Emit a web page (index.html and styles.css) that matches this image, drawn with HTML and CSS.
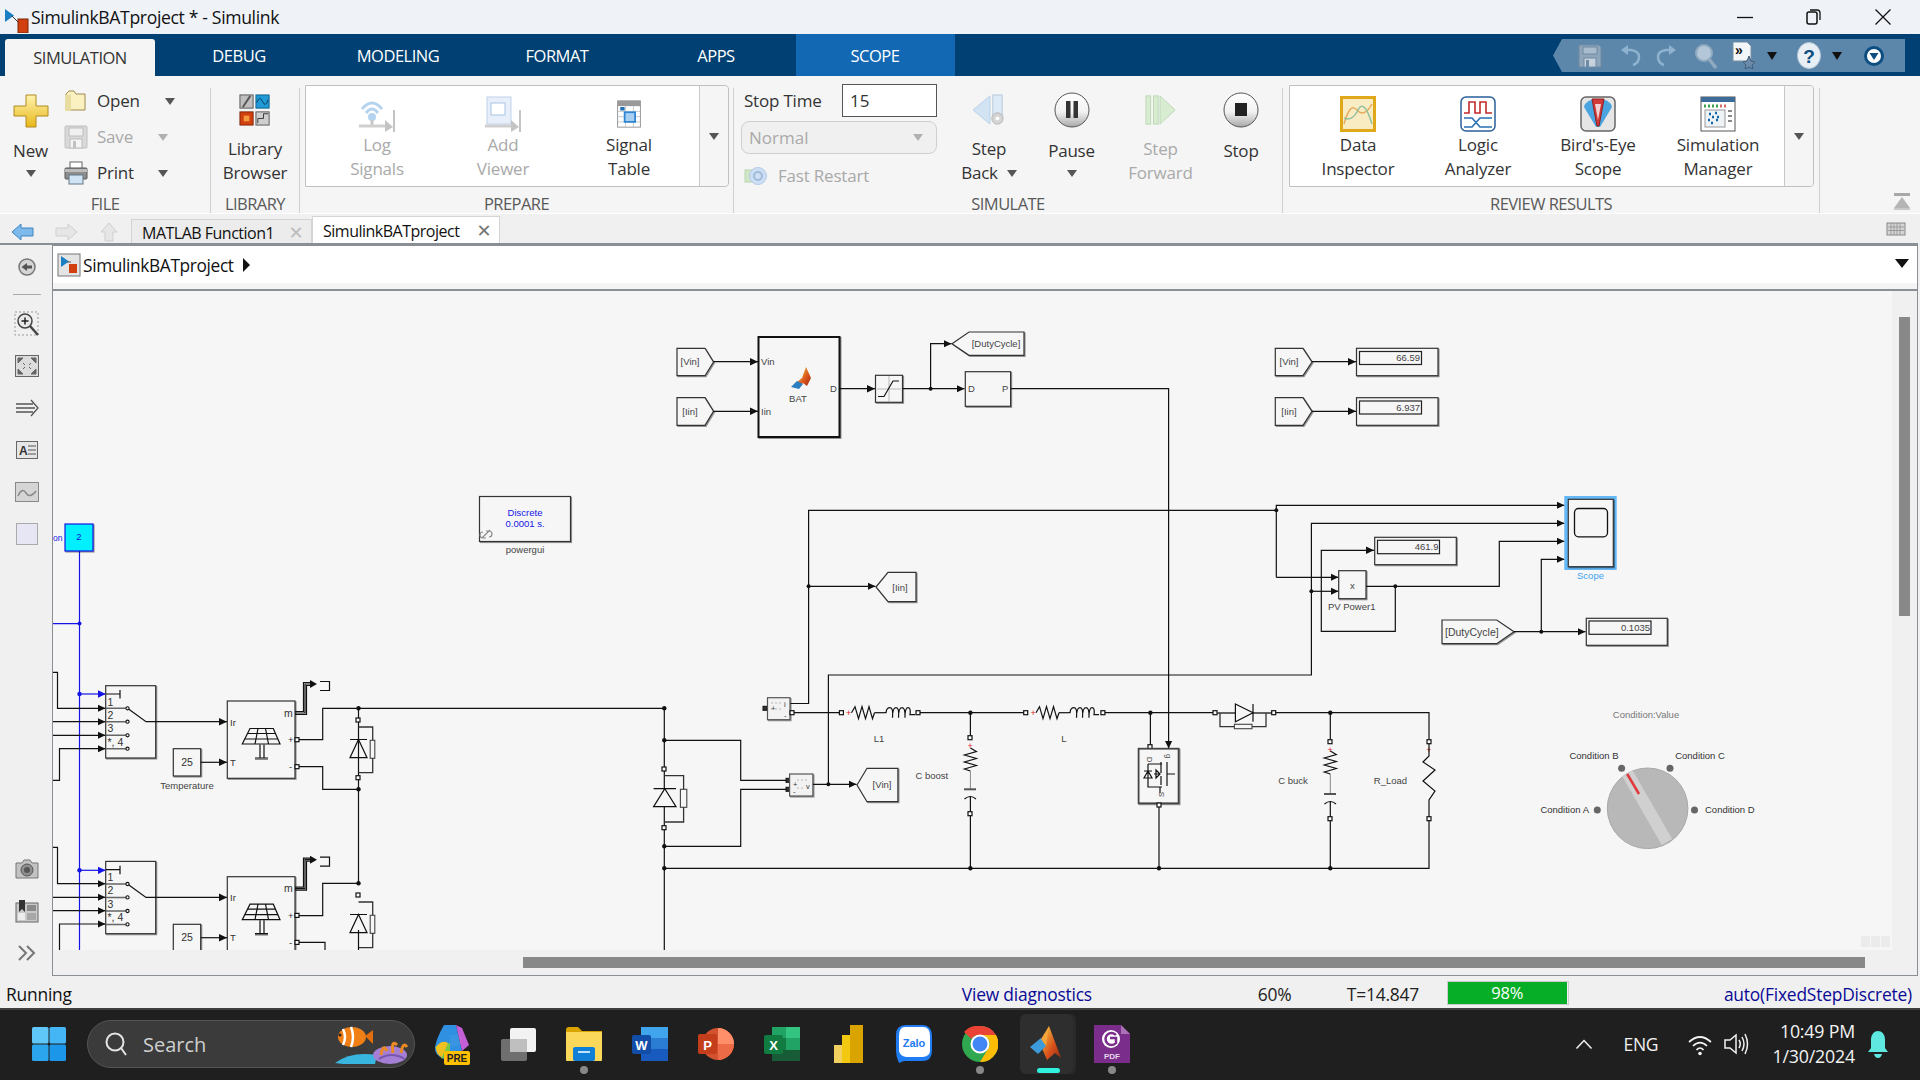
FILE: index.html
```html
<!DOCTYPE html>
<html lang="en">
<head>
<meta charset="utf-8">
<title>SimulinkBATproject * - Simulink</title>
<link rel="stylesheet" href="styles.css">
</head>
<body>
<svg class="defs" aria-hidden="true">
  <defs>
    <linearGradient id="gKnob" x1="0" y1="0" x2="0" y2="1"><stop offset="0" stop-color="#fff"/><stop offset=".55" stop-color="#f2f2f2"/><stop offset="1" stop-color="#a9a9a9"/></linearGradient>
    <linearGradient id="gYel" x1="0" y1="0" x2="0" y2="1"><stop offset="0" stop-color="#fff3b0"/><stop offset="1" stop-color="#e8b818"/></linearGradient>
    <linearGradient id="gMat" x1="0" y1="0" x2="1" y2="1"><stop offset="0" stop-color="#f6d040"/><stop offset=".6" stop-color="#d9501c"/><stop offset="1" stop-color="#8d2a10"/></linearGradient>
    <marker id="a" markerUnits="userSpaceOnUse" markerWidth="9" markerHeight="9" refX="8" refY="4.5" orient="auto"><path d="M0 .7L8 4.5L0 8.3z" fill="#111"/></marker>
    <marker id="ab" markerUnits="userSpaceOnUse" markerWidth="9" markerHeight="9" refX="8" refY="4.5" orient="auto"><path d="M0 .7L8 4.5L0 8.3z" fill="#1414e6"/></marker>
    <g id="pt"><rect x="-2" y="-2" width="4" height="4" fill="#fff" stroke="#111" stroke-width="1.2"/></g>
    <g id="ptf"><rect x="-2" y="-2" width="4" height="4" fill="#333" stroke="#111" stroke-width="1"/></g>
    <g id="simu"><rect x="1" y="1" width="22" height="22" fill="#e4e4e4" stroke="#777"/><path d="M4 3v11l8-5.5z" fill="#1b7fc4"/><path d="M10 9h4" stroke="#555"/><rect x="12" y="11" width="8" height="9" fill="#d2400f"/></g>
    <g id="switch">
      <rect class="blk" x="105.7" y="685.7" width="50" height="72.3"/>
      <path class="wg" d="M106 708.3H127M106 721.7H127M106 735.3H127M106 748.7H127"/>
      <path class="w" d="M106 694H120M120 690V698.5M127.5 708.3L146 721.7H155.7"/>
      <circle class="oc" cx="127.5" cy="708.3" r="1.6"/><circle class="oc" cx="127.5" cy="721.7" r="1.6"/><circle class="oc" cx="127.5" cy="735.3" r="1.6"/><circle class="oc" cx="127.5" cy="748.7" r="1.6"/>
      <text class="t10" x="107.5" y="705.5">1</text><text class="t10" x="107.5" y="718.7">2</text><text class="t10" x="107.5" y="731.9">3</text><text class="t10" x="107.5" y="745.5">*, 4</text>
    </g>
    <g id="pv">
      <rect class="blk" x="227.3" y="701" width="67.7" height="77.3"/>
      <path class="w" d="M250 728.5H273.3L280 744H242.3zM244.5 739H277.8M247 733.5H275.8M258 728.5L255 744M265.5 728.5L268.5 744"/>
      <path class="w" d="M260 744.5V758M264 744.5V758M255 758H268"/><path class="wg" d="M255 759H268"/>
      <text class="t9" x="230" y="725.5">Ir</text><text class="t9" x="230" y="765.5">T</text>
      <text class="t10" x="284" y="716.5">m</text><text class="t9" x="288" y="743">+</text><text class="t9" x="289" y="770">-</text>
      <path class="w" d="M295 711.5H303.5V682.5H312"/><path class="w" d="M295 713H305V684H312"/><path class="w" d="M295 714.5H306.5V685.5H312"/>
      <path d="M310 680L317 684L310 688z" fill="#111"/>
      <path class="w" d="M320 681.5H329.5V690.5H320"/>
      <use href="#pt" x="297" y="739.7"/><use href="#pt" x="297" y="766.7"/>
    </g>
    <g id="diode">
      <path class="w" d="M350 739.5H367M358.5 739.5L367 757.7H350z"/>
      <rect class="snb" x="370.2" y="740.3" width="4.6" height="18"/>
      <path class="wd" d="M358.5 727H372.7V740M372.7 758V772.7H358.5"/>
      <use href="#pt" x="358" y="720"/><use href="#pt" x="358" y="777.7"/>
    </g>
    <path id="zig" d="M0 0L3.5 -6L7 6L10.5 -6L14 6L17.5 -6L21 6L23 0"/>
    <path id="coil" d="M0 0H1Q1.5 -5 5 -5T7.5 5Q7.5 -5 11 -5T13.5 5Q13.5 -5 17 -5T20 5Q20 -5 23 -5T25 2L27 2H30"/>
  </defs>
</svg>

<div class="app">
  <header class="titlebar">
    <svg class="title-icon" width="26" height="25" viewBox="0 0 26 25"><path d="M2 1v13l9-6.500z" fill="#1b7fc4"/><path d="M9 8l6 6" stroke="#333" fill="none"/><rect x="15" y="11" width="10" height="14" fill="#d2400f" stroke="#7a2408"/></svg>
    <span class="title-text">SimulinkBATproject * - Simulink</span>
    <div class="winctl">
      <svg class="wc" width="20" height="20" viewBox="0 0 20 20"><path d="M2 10.500H18" stroke="#111" stroke-width="1.300"/></svg>
      <svg class="wc" width="20" height="20" viewBox="0 0 20 20"><rect x="3" y="5" width="10" height="12" rx="2" fill="none" stroke="#111" stroke-width="1.500"/><path d="M6 3h7q3 0 3 3v7" fill="none" stroke="#111" stroke-width="1.300"/></svg>
      <svg class="wc" width="20" height="20" viewBox="0 0 20 20"><path d="M2.500 2.500L17.500 17.500M17.500 2.500L2.500 17.500" stroke="#111" stroke-width="1.300"/></svg>
    </div>
  </header>

  <nav class="tabbar">
    <div class="tab tab-active">SIMULATION</div>
    <div class="tab">DEBUG</div>
    <div class="tab">MODELING</div>
    <div class="tab">FORMAT</div>
    <div class="tab">APPS</div>
    <div class="tab tab-scope">SCOPE</div>
    <div class="qat">
      <svg class="q-save" width="24" height="24" viewBox="0 0 24 24"><path d="M1 1h20l2 2v20H1z" fill="#8ea5ba" stroke="#6f8aa3"/><rect x="5" y="3" width="14" height="7" fill="#a9bccd" stroke="#6f8aa3"/><rect x="6" y="14" width="12" height="9" fill="#c6d3df" stroke="#6f8aa3"/><rect x="8" y="16" width="3" height="7" fill="#6f8aa3"/></svg>
      <svg class="q-undo" width="22" height="24" viewBox="0 0 22 24"><path d="M14 21Q20 19 20 13T12 6H7" fill="none" stroke="#8fb2cf" stroke-width="2.500"/><path d="M9 1L2 6L9 11z" fill="#8fb2cf"/></svg>
      <svg class="q-redo" width="22" height="24" viewBox="0 0 22 24"><path d="M8 21Q2 19 2 13T10 6H15" fill="none" stroke="#8fb2cf" stroke-width="2.500"/><path d="M13 1L20 6L13 11z" fill="#8fb2cf"/></svg>
      <svg class="q-find" width="24" height="26" viewBox="0 0 24 26"><circle cx="10" cy="10" r="8" fill="#b4c7d8" stroke="#8fa9bf" stroke-width="2"/><path d="M15 16L22 25" stroke="#8fa9bf" stroke-width="3.500"/></svg>
      <svg class="q-short" width="24" height="27" viewBox="0 0 24 27"><path d="M1 0h14l4 4v15H1z" fill="#f3f6f9" stroke="#7d8f9e"/><text class="q-chev" x="3" y="13">»</text><path d="M17 14l2 5 4 1-3 3 1 4-4-2-4 2 1-4-3-3 4-1z" fill="#6d8cab" stroke="#3f5d79"/></svg>
      <span class="q-caret"></span>
      <svg class="q-help" width="24" height="27" viewBox="0 0 24 27"><ellipse cx="12" cy="13.500" rx="11.500" ry="13" fill="#e7eef4" stroke="#b6c9d9"/><text class="q-q" x="12" y="21" text-anchor="middle">?</text></svg>
      <span class="q-caret q-caret2"></span>
      <svg class="q-down" width="20" height="22" viewBox="0 0 20 22"><circle cx="10" cy="11" r="8.500" fill="#fff" stroke="#0d4d80" stroke-width="3"/><path d="M5.500 8H14.500L10 15z" fill="#0d4d80"/></svg>
    </div>
  </nav>

  <section class="ribbon">
    <div class="group g-file">
      <div class="gbody">
        <div class="big g-new">
          <svg width="36" height="34" viewBox="0 0 36 34"><path d="M13 1h10v11h12v10H23v11H13V22H1V12h12z" fill="url(#gYel)" stroke="#b08a20"/></svg>
          <span class="lbl">New</span>
          <span class="caret"></span>
        </div>
        <div class="file-list">
          <div class="frow">
            <svg width="24" height="22" viewBox="0 0 24 22"><path d="M2 4l3-3 5 0 2 3h9v16H2z" fill="#fbf0c0" stroke="#9d8a4c"/><path d="M1 5h6v16H1z" fill="#e9dca0"/></svg>
            <span class="lbl">Open</span><span class="caret c-open"></span>
          </div>
          <div class="frow dim">
            <svg width="24" height="24" viewBox="0 0 24 24"><rect x="1" y="1" width="22" height="22" rx="1" fill="#d9d9d9" stroke="#c0c0c0"/><rect x="5" y="3" width="14" height="8" fill="#f0f0f0" stroke="#bdbdbd"/><rect x="6" y="14" width="12" height="9" fill="#f4f4f4" stroke="#bdbdbd"/><rect x="9" y="16" width="3" height="7" fill="#c2c2c2"/></svg>
            <span class="lbl">Save</span><span class="caret c-save"></span>
          </div>
          <div class="frow">
            <svg width="24" height="24" viewBox="0 0 24 24"><rect x="6" y="1" width="12" height="7" fill="#fff" stroke="#666"/><rect x="1" y="7" width="22" height="11" rx="1" fill="#8d8d8d" stroke="#555"/><rect x="1" y="8" width="22" height="3" fill="#bcbcbc"/><rect x="5" y="14" width="14" height="9" fill="#cfe3f5" stroke="#66788a"/></svg>
            <span class="lbl">Print</span><span class="caret c-save"></span>
          </div>
        </div>
      </div>
      <div class="glabel">FILE</div>
    </div>

    <div class="group g-lib">
      <div class="gbody">
        <div class="big g-libbtn">
          <svg width="34" height="34" viewBox="0 0 34 34"><rect x="1" y="1" width="14" height="14" fill="#bfbfbf" stroke="#555"/><path d="M4 14L12 2" stroke="#555" stroke-width="2"/><rect x="18" y="1" width="14" height="14" fill="#1f9ad6" stroke="#0d5f8d"/><path d="M19 9Q22 1 25 8T31 6" stroke="#0a3a5c" fill="none"/><rect x="1" y="19" width="14" height="14" fill="#d2400f" stroke="#7d2608"/><rect x="5" y="23" width="6" height="6" fill="#f29a3e"/><rect x="18" y="19" width="14" height="14" fill="#cfcfcf" stroke="#555"/><path d="M20 31V26H26V21H31" stroke="#333" fill="none"/></svg>
          <span class="lbl">Library</span>
          <span class="lbl">Browser</span>
        </div>
      </div>
      <div class="glabel">LIBRARY</div>
    </div>

    <div class="group g-prep">
      <div class="gbody">
        <div class="gallery gal-prep">
          <div class="gitem dim">
            <svg width="38" height="36" viewBox="0 0 38 36"><path d="M4 13Q14 1 24 13M8 17Q14 9 20 17" fill="none" stroke="#b4d3ee" stroke-width="3"/><circle cx="14" cy="21" r="4" fill="#b4d3ee"/><path d="M14 24V29" stroke="#c8c8c8" stroke-width="3"/><path d="M1 30H28" stroke="#cfcfcf" stroke-width="3"/><path d="M27 24L35 31L27 36z" fill="#c4c4c4"/><path d="M36 14V36" stroke="#c4c4c4" stroke-width="2"/></svg>
            <span class="lbl">Log</span><span class="lbl">Signals</span>
          </div>
          <div class="gitem dim">
            <svg width="38" height="36" viewBox="0 0 38 36"><rect x="3" y="1" width="24" height="27" fill="#e7effa" stroke="#bfd2ea"/><rect x="7" y="7" width="14" height="12" fill="#fff" stroke="#a9c4e4"/><path d="M1 30H28" stroke="#cfcfcf" stroke-width="3"/><path d="M27 24L35 31L27 36z" fill="#c4c4c4"/><path d="M36 14V36" stroke="#c4c4c4" stroke-width="2"/></svg>
            <span class="lbl">Add</span><span class="lbl">Viewer</span>
          </div>
          <div class="gitem">
            <svg class="gi-sig" width="26" height="28" viewBox="0 0 28 32"><rect x="1" y="1" width="26" height="30" fill="#fff" stroke="#8a8a8a"/><rect x="1" y="1" width="26" height="6" fill="#9a9a9a"/><rect x="4" y="8" width="5" height="4" fill="#1f6fb5"/><path d="M1 13H27M1 19H27M1 25H27M10 7V31M19 7V31" stroke="#c4c4c4"/><rect x="9" y="14" width="12" height="11" fill="#a8cff2" stroke="#2e86d2" stroke-width="2"/></svg>
            <span class="lbl">Signal</span><span class="lbl">Table</span>
          </div>
          <div class="gmore"><span class="caret caret-dk"></span></div>
        </div>
      </div>
      <div class="glabel">PREPARE</div>
    </div>

    <div class="group g-sim">
      <div class="gbody">
        <div class="stop-col">
          <div class="stop-row"><span class="lbl">Stop Time</span><span class="stop-input">15</span></div>
          <div class="mode"><span>Normal</span><span class="caret"></span></div>
          <div class="fast dim">
            <svg width="24" height="22" viewBox="0 0 24 22"><rect x="1" y="5" width="8" height="12" fill="#cfe7c7" stroke="#b9d4b1"/><circle cx="14" cy="11" r="8.500" fill="#cddff4" stroke="#b2cbe6"/><circle cx="14" cy="11" r="4" fill="none" stroke="#9fbbd9" stroke-width="2"/></svg>
            <span class="lbl">Fast Restart</span>
          </div>
        </div>
        <div class="big g-stepb dim">
          <svg width="36" height="34" viewBox="0 0 36 34"><path d="M19 2L1 17L19 32z" fill="#d2e3f4" stroke="#b8cfe6"/><rect x="22" y="1" width="10" height="22" fill="#dce9f6" stroke="#b9c9d8"/><circle cx="27" cy="26" r="6" fill="#d5d5d5" stroke="#b3b3b3"/><circle cx="27" cy="26" r="2" fill="#fff"/></svg>
          <span class="lbl lbl-dark">Step</span>
          <span class="lbl lbl-dark back-row">Back<span class="caret"></span></span>
        </div>
        <div class="big g-pause round">
          <svg width="36" height="36" viewBox="0 0 36 36"><circle cx="18" cy="18" r="17" fill="url(#gKnob)" stroke="#555"/><rect x="12" y="9" width="4.500" height="17" fill="#333"/><rect x="19.500" y="9" width="4.500" height="17" fill="#333"/></svg>
          <span class="lbl">Pause</span>
          <span class="caret"></span>
        </div>
        <div class="big g-stepf dim">
          <svg width="34" height="34" viewBox="0 0 34 34"><rect x="1" y="2" width="5" height="30" fill="#d8ecd2" stroke="#bcd8b4"/><rect x="9" y="2" width="5" height="30" fill="#d8ecd2" stroke="#bcd8b4"/><path d="M16 2L32 17L16 32z" fill="#d8ecd2" stroke="#bcd8b4"/></svg>
          <span class="lbl">Step</span>
          <span class="lbl">Forward</span>
        </div>
        <div class="big g-stop round">
          <svg width="36" height="36" viewBox="0 0 36 36"><circle cx="18" cy="18" r="17" fill="url(#gKnob)" stroke="#555"/><rect x="12" y="11" width="12" height="13" fill="#222"/></svg>
          <span class="lbl">Stop</span>
        </div>
      </div>
      <div class="glabel">SIMULATE</div>
    </div>

    <div class="group g-rev">
      <div class="gbody">
        <div class="gallery gal-rev">
          <div class="gitem ritem">
            <svg width="36" height="36" viewBox="0 0 36 36"><rect x="1.500" y="1.500" width="33" height="33" fill="#f9ecc3" stroke="#e0a91b" stroke-width="3"/><path d="M4 28Q10 6 17 14T32 8" fill="none" stroke="#e8a95c" stroke-width="1.500"/><path d="M4 22Q12 26 18 14T32 28" fill="none" stroke="#8fc0a0" stroke-width="1.500"/></svg>
            <span class="lbl">Data</span><span class="lbl">Inspector</span>
          </div>
          <div class="gitem ritem">
            <svg width="36" height="36" viewBox="0 0 36 36"><rect x="1" y="1" width="34" height="34" rx="5" fill="#fff" stroke="#2a5f9a" stroke-width="1.500"/><path d="M4 17H9V6H15V17H20V6H26V17H32" fill="none" stroke="#c22b2b" stroke-width="1.600"/><path d="M4 22H12L20 31H32M4 31H12L20 22H32" fill="none" stroke="#2a71b3" stroke-width="1.600"/></svg>
            <span class="lbl">Logic</span><span class="lbl">Analyzer</span>
          </div>
          <div class="gitem ritem">
            <svg width="36" height="36" viewBox="0 0 36 36"><rect x="1" y="1" width="34" height="34" rx="5" fill="#e5e5e5" stroke="#666" stroke-width="1.500"/><path d="M4 11Q6 3 18 3T32 11L20 31H16z" fill="#4aa4e0"/><path d="M12 3H24L19 30H17z" fill="#d23a3a" stroke="#8f1d1d"/><path d="M15 8H21L18 24z" fill="#f4d0d0"/></svg>
            <span class="lbl">Bird's-Eye</span><span class="lbl">Scope</span>
          </div>
          <div class="gitem ritem">
            <svg width="36" height="36" viewBox="0 0 36 36"><rect x="1" y="1" width="34" height="34" fill="#fff" stroke="#555"/><rect x="1" y="1" width="34" height="5" fill="#3d6c99"/><path d="M4 10h2M8 10h2M12 10h2M16 10h2" stroke="#3fa24a" stroke-width="3"/><path d="M20 10h2M24 10h2" stroke="#d26a6a" stroke-width="3"/><rect x="5" y="14" width="20" height="17" fill="#eef3f8" stroke="#999"/><path d="M9 18h2M15 17h2M12 21h2M8 24h2M16 24h2M11 27h2M17 21h2" stroke="#1366ab" stroke-width="2.500"/><path d="M28 15h4M28 20h4M28 25h4" stroke="#888" stroke-width="2"/></svg>
            <span class="lbl">Simulation</span><span class="lbl">Manager</span>
          </div>
          <div class="gmore"><span class="caret caret-dk"></span></div>
        </div>
      </div>
      <div class="glabel">REVIEW RESULTS</div>
    </div>

    <div class="g-tail">
      <svg width="18" height="18" viewBox="0 0 18 18"><rect x="1" y="1" width="16" height="3" fill="#a8a8a8"/><path d="M9 5L17 16H1z" fill="#b5b5b5"/><rect x="1" y="16" width="16" height="2" fill="#c8c8c8"/></svg>
    </div>
  </section>

  <div class="doc-tabs">
    <div class="nav">
      <svg width="24" height="18" viewBox="0 0 24 18"><path d="M10 1L1 9L10 17V13H22V5H10z" fill="#7db9ea" stroke="#3d87c4"/></svg>
      <svg width="24" height="18" viewBox="0 0 24 18"><path d="M14 1L23 9L14 17V13H2V5H14z" fill="#e6e6e6" stroke="#cfcfcf"/></svg>
      <svg width="20" height="20" viewBox="0 0 20 20"><path d="M10 1L18 10H14V19H6V10H2z" fill="#e6e6e6" stroke="#cfcfcf"/></svg>
    </div>
    <div class="dtab dtab-off"><span>MATLAB Function1</span><b class="x x-off">✕</b></div>
    <div class="dtab dtab-on"><span>SimulinkBATproject</span><b class="x">✕</b></div>
    <svg class="kbd" width="20" height="18" viewBox="0 0 20 18"><rect x="1" y="3" width="18" height="12" fill="#d5d5d5" stroke="#888"/><path d="M2 7H18M2 10.500H18M5 3V15M8 3V15M11 3V15M14 3V15" stroke="#8f8f8f" stroke-width=".8"/></svg>
  </div>

  <div class="main">
    <aside class="tools">
      <div class="tool"><svg width="20" height="20" viewBox="0 0 20 20"><circle cx="10" cy="10" r="8" fill="#d5d5d5" stroke="#777" stroke-width="1.500"/><path d="M4.500 10L10 6V8.500H15V11.500H10V14z" fill="#555"/></svg></div>
      <div class="tool-sep"></div>
      <div class="tool"><svg width="26" height="26" viewBox="0 0 26 26"><rect x="1" y="1" width="23" height="23" fill="none" stroke="#999" stroke-dasharray="2 2"/><circle cx="11" cy="10" r="7" fill="#e9e9e9" stroke="#444" stroke-width="1.500"/><path d="M7.500 10H14.500M11 6.500V13.500" stroke="#222" stroke-width="1.500"/><path d="M16 15L24 24" stroke="#444" stroke-width="2.500"/></svg></div>
      <div class="tool"><svg width="24" height="22" viewBox="0 0 24 22"><rect x=".5" y=".5" width="23" height="21" fill="#dcdcdc" stroke="#666"/><path d="M3 3H8L3 8zM21 3V8L16 3zM3 19V14L8 19zM21 19H16L21 14zM8 8L10 10M16 8L14 10M8 14L10 12M16 14L14 12" fill="#666" stroke="#666"/></svg></div>
      <div class="tool"><svg width="24" height="18" viewBox="0 0 24 18"><path d="M1 5H18M1 9H20M1 13H18" stroke="#555" stroke-width="1.300"/><path d="M16 1L23 9L16 17" fill="none" stroke="#555" stroke-width="1.300"/></svg></div>
      <div class="tool"><svg width="22" height="18" viewBox="0 0 22 18"><rect x=".5" y=".5" width="21" height="17" fill="#e6e6e6" stroke="#666"/><text class="tool-a" x="3" y="13.500">A</text><path d="M12 5H20M12 9H20M12 13H20" stroke="#555"/></svg></div>
      <div class="tool"><svg width="24" height="20" viewBox="0 0 24 20"><rect x=".5" y=".5" width="23" height="19" fill="#d5d5d5" stroke="#888"/><path d="M3 14Q7 5 11 11T21 9" fill="none" stroke="#8a8a8a" stroke-width="1.500"/></svg></div>
      <div class="tool"><svg width="22" height="22" viewBox="0 0 22 22"><rect x=".5" y=".5" width="21" height="21" fill="#e6e6f5" stroke="#aaa"/></svg></div>
      <div class="tools-gap"></div>
      <div class="tool"><svg width="24" height="20" viewBox="0 0 24 20"><path d="M1 4H7L9 1H15L17 4H23V19H1z" fill="#c2c2c2" stroke="#777"/><circle cx="12" cy="11" r="6" fill="#8f8f8f" stroke="#555"/><circle cx="12" cy="11" r="3" fill="#555"/></svg></div>
      <div class="tool"><svg width="24" height="24" viewBox="0 0 24 24"><rect x="1" y="4" width="22" height="19" fill="#c9c9c9" stroke="#666"/><rect x="12" y="6" width="9" height="6" fill="#8a8a8a"/><rect x="12" y="14" width="9" height="7" fill="#a8a8a8"/><rect x="3" y="14" width="7" height="7" fill="#ececec"/><path d="M4 1H10V13L7 10L4 13z" fill="#333"/></svg></div>
      <div class="tool"><svg width="18" height="16" viewBox="0 0 18 16"><path d="M1 1L8 8L1 15M9 1L16 8L9 15" fill="none" stroke="#777" stroke-width="2"/></svg></div>
    </aside>

    <div class="editor">
      <div class="crumb">
        <div class="crumb-in">
          <svg class="crumb-ic" width="24" height="24" viewBox="0 0 24 24"><use href="#simu"/></svg>
          <span class="crumb-txt">SimulinkBATproject</span>
          <span class="crumb-arr"></span>
          <span class="crumb-drop"></span>
        </div>
      </div>
      <div class="work">
        <div class="canvas">
<svg class="diagram" viewBox="53 291 1839 659" width="1839" height="659">
  <!-- blue selector -->
  <path class="wb" d="M79.500 551V950M53 623.600H79.500"/>
  <polyline class="wb" points="79.500,694 105.700,694" marker-end="url(#ab)"/>
  <polyline class="wb" points="79.500,870.300 105.700,870.300" marker-end="url(#ab)"/>
  <circle class="jb" cx="79.500" cy="623.600" r="2"/><circle class="jb" cx="79.500" cy="694" r="2.200"/><circle class="jb" cx="79.500" cy="870.300" r="2.200"/>
  <rect class="cyan" x="65" y="524" width="28" height="27"/>
  <text class="t9 bluetxt" x="79" y="540" text-anchor="middle">2</text>
  <text class="t8 bluetxt" x="53" y="541">on</text>

  <!-- left feeds row 1 -->
  <polyline class="w" points="53,672.300 57.500,672.300 57.500,708.300 105.500,708.300" marker-end="url(#a)"/>
  <polyline class="w" points="53,721.700 105.500,721.700" marker-end="url(#a)"/>
  <polyline class="w" points="53,735.300 105.500,735.300" marker-end="url(#a)"/>
  <polyline class="w" points="53,780.300 59.500,780.300 59.500,748.700 105.500,748.700" marker-end="url(#a)"/>
  <use href="#switch"/>
  <polyline class="w" points="155.700,721.700 227,721.700" marker-end="url(#a)"/>
  <rect class="blk" x="173.300" y="748.700" width="27.400" height="27.300"/>
  <text class="t10" x="187" y="765.500" text-anchor="middle">25</text>
  <text class="t9 dk" x="187" y="788.500" text-anchor="middle">Temperature</text>
  <polyline class="w" points="200.700,762.300 227,762.300" marker-end="url(#a)"/>
  <use href="#pv"/>
  <polyline class="w" points="299,739.700 322.700,739.700 322.700,708.300 664,708.300"/>
  <polyline class="w" points="299,766.700 322.700,766.700 322.700,789.300 358.500,789.300"/>
  <path class="w" d="M358.500 708.300V883.300"/>
  <use href="#diode"/>

  <!-- left feeds row 2 -->
  <polyline class="w" points="53,847.300 57.500,847.300 57.500,883.700 105.500,883.700" marker-end="url(#a)"/>
  <polyline class="w" points="53,897.300 105.500,897.300" marker-end="url(#a)"/>
  <polyline class="w" points="53,910.700 105.500,910.700" marker-end="url(#a)"/>
  <polyline class="w" points="59.500,950 59.500,924 105.500,924" marker-end="url(#a)"/>
  <use href="#switch" y="175.700"/>
  <polyline class="w" points="155.700,897.400 227,897.400" marker-end="url(#a)"/>
  <rect class="blk" x="173.300" y="924.300" width="27.400" height="40"/>
  <text class="t10" x="187" y="941" text-anchor="middle">25</text>
  <polyline class="w" points="200.700,937.700 227,937.700" marker-end="url(#a)"/>
  <use href="#pv" y="175.700"/>
  <polyline class="w" points="299,915.700 322.700,915.700 322.700,883.300 358.500,883.300"/>
  <polyline class="w" points="299,942.400 325,942.400 325,950"/>
  <use href="#diode" y="175"/>
  <path class="w" d="M358.500 930V950"/>
  <circle class="j" cx="358.500" cy="708.300" r="2.200"/><circle class="j" cx="358.500" cy="789.300" r="2.200"/><circle class="j" cx="358.500" cy="883.300" r="2.200"/>

  <!-- powergui -->
  <rect class="blk" x="479.500" y="496.500" width="91" height="45"/>
  <text class="t9 bluetxt" x="525" y="516" text-anchor="middle">Discrete</text>
  <text class="t9 bluetxt" x="525" y="527" text-anchor="middle">0.0001 s.</text>
  <g class="lnk"><path d="M482 538L490 530M486 538h-3a3 3 0 0 1 0-6M486 531h3a3 3 0 0 1 0 6"/></g>
  <text class="t9 dk" x="525" y="553" text-anchor="middle">powergui</text>

  <!-- BAT -->
  <path class="blk" d="M677 348.300H705L713.500 362L705 375.700H677z"/><text class="t9 dk" x="690" y="365" text-anchor="middle">[Vin]</text>
  <path class="blk" d="M677 397.700H705L713.500 411.300L705 425.300H677z"/><text class="t9 dk" x="690" y="414.500" text-anchor="middle">[Iin]</text>
  <polyline class="w" points="713.500,361.700 758,361.700" marker-end="url(#a)"/>
  <polyline class="w" points="713.500,411.300 758,411.300" marker-end="url(#a)"/>
  <rect class="blk thick" x="758.500" y="337" width="81" height="100"/>
  <text class="t9 dk" x="761" y="365">Vin</text><text class="t9 dk" x="761" y="415">Iin</text><text class="t9 dk" x="830" y="392">D</text>
  <path d="M797 382L802 378L806 367L811 378L807 386L803 383L799 388z" fill="url(#gMat)"/><path d="M791 387L797 381L803 384L799 389z" fill="#2a7fc0"/>
  <text class="t9 dk" x="798" y="402" text-anchor="middle">BAT</text>
  <polyline class="w" points="839.600,388.700 875,388.700" marker-end="url(#a)"/>
  <rect class="blk" x="875.500" y="375.300" width="27" height="27"/>
  <path class="wg2" d="M889 376V402M877 389H901"/><path class="w" d="M878 396.500H884L893 381H899"/>
  <polyline class="w" points="902.500,388.700 964.500,388.700" marker-end="url(#a)"/>
  <polyline class="w" points="930.600,388.700 930.600,343.700 951.500,343.700" marker-end="url(#a)"/>
  <circle class="j" cx="930.600" cy="388.700" r="2"/>
  <path class="blk" d="M952 343.700L969 332H1024V355.300H969z"/><text class="t9 dk" x="996" y="347" text-anchor="middle">[DutyCycle]</text>
  <rect class="blk" x="965.300" y="371.700" width="45.300" height="34.600"/>
  <text class="t9 dk" x="968" y="392">D</text><text class="t9 dk" x="1002" y="392">P</text>
  <polyline class="w" points="1010.600,388.700 1168.600,388.700 1168.600,748.500" marker-end="url(#a)"/>

  <!-- upper displays -->
  <path class="blk" d="M1275.300 348.300H1303L1312 362L1303 375.700H1275.300z"/><text class="t9 dk" x="1289" y="365" text-anchor="middle">[Vin]</text>
  <path class="blk" d="M1275.300 397.700H1303L1312 411.300L1303 425.300H1275.300z"/><text class="t9 dk" x="1289" y="414.500" text-anchor="middle">[Iin]</text>
  <polyline class="w" points="1312,361.700 1356,361.700" marker-end="url(#a)"/>
  <polyline class="w" points="1312,411.300 1356,411.300" marker-end="url(#a)"/>
  <rect class="blk" x="1356.500" y="348.300" width="81.500" height="27.400"/><rect class="inner" x="1359.500" y="351.500" width="62" height="13"/><text class="t9 dk" x="1420" y="361" text-anchor="end">66.59</text>
  <rect class="blk" x="1356.500" y="397.700" width="81.500" height="27.600"/><rect class="inner" x="1359.500" y="401" width="62" height="13"/><text class="t9 dk" x="1420" y="411" text-anchor="end">6.937</text>

  <!-- current / voltage feedback -->
  <polyline class="w" points="790,703.500 808.600,703.500 808.600,510.300 1276.300,510.300"/>
  <polyline class="w" points="808.600,586.300 875.500,586.300" marker-end="url(#a)"/>
  <circle class="j" cx="808.600" cy="586.300" r="2"/>
  <path class="blk" d="M876 587L888 572.300H916V601.700H888z"/><text class="t9 dk" x="900" y="590.500" text-anchor="middle">[Iin]</text>
  <polyline class="w" points="1276.300,577.300 1276.300,505.300 1564.500,505.300" marker-end="url(#a)"/>
  <polyline class="w" points="1276.300,577.300 1338.500,577.300" marker-end="url(#a)"/>
  <circle class="j" cx="1276.300" cy="510.300" r="2"/>
  <polyline class="w" points="828.400,784.300 828.400,675 1311.400,675 1311.400,523.300 1564.500,523.300" marker-end="url(#a)"/>
  <polyline class="w" points="1311.400,591.300 1338.500,591.300" marker-end="url(#a)"/>
  <circle class="j" cx="1311.400" cy="591.300" r="2"/>
  <rect class="blk" x="1338.700" y="570.700" width="27.300" height="28"/>
  <text class="t9 dk" x="1352.400" y="589" text-anchor="middle">x</text>
  <text class="t9 dk" x="1351.700" y="610" text-anchor="middle">PV Power1</text>
  <polyline class="w" points="1366,586.300 1499.300,586.300 1499.300,541.300 1564.500,541.300" marker-end="url(#a)"/>
  <polyline class="w" points="1395.300,586.300 1395.300,631.300 1321.300,631.300 1321.300,550.300 1374,550.300" marker-end="url(#a)"/>
  <circle class="j" cx="1395.300" cy="586.300" r="2"/>
  <rect class="blk" x="1374.700" y="537.300" width="81.600" height="27.400"/><rect class="inner" x="1377.500" y="540.300" width="62" height="13.400"/><text class="t9 dk" x="1438.500" y="550" text-anchor="end">461.9</text>
  <path class="blk" d="M1442 620H1496.700L1514 631.700L1496.700 643.700H1442z"/><text class="t10 dk" x="1445" y="635.500">[DutyCycle]</text>
  <polyline class="w" points="1514,631.700 1585.500,631.700" marker-end="url(#a)"/>
  <polyline class="w" points="1541.300,631.700 1541.300,559.300 1564.500,559.300" marker-end="url(#a)"/>
  <circle class="j" cx="1541.300" cy="631.700" r="2"/>
  <rect class="blk" x="1586.300" y="618.300" width="81" height="27"/><rect class="inner" x="1589" y="621" width="62" height="13.300"/><text class="t9 dk" x="1650" y="631" text-anchor="end">0.1035</text>

  <!-- scope -->
  <rect class="sel" x="1564.300" y="496" width="52.400" height="74"/>
  <rect class="blk" x="1568.300" y="499.300" width="45" height="67.400"/>
  <rect class="scr" x="1574.500" y="508.500" width="33" height="28.300" rx="4"/>
  <text class="t9 scopetxt" x="1590.500" y="578.500" text-anchor="middle">Scope</text>

  <!-- converter -->
  <use href="#ptf" x="765" y="708.300"/>
  <rect class="blk sens" x="767.500" y="697.700" width="22.500" height="22"/>
  <text class="t7" x="771" y="711">+</text><text class="t7" x="784" y="707">i</text><text class="t7" x="784" y="718">-</text>
  <path class="wg2" d="M771 703H782M771 709H782" stroke-dasharray="2 2"/>
  <use href="#pt" x="792" y="712.700"/>
  <path class="w" d="M794 712.700H839"/>
  <use href="#pt" x="841.400" y="712.700"/>
  <text class="red" x="846" y="716">+</text>
  <use class="w" href="#zig" x="851.500" y="712.700"/>
  <use class="w" href="#coil" x="885" y="712.700"/>
  <path class="w" d="M874.500 712.700H885"/>
  <use href="#pt" x="918" y="712.700"/>
  <text class="t9 dk" x="879" y="742" text-anchor="middle">L1</text>
  <path class="w" d="M920 712.700H1023.700"/>
  <use href="#pt" x="1025.700" y="712.700"/>
  <text class="red" x="1030.500" y="716">+</text>
  <use class="w" href="#zig" x="1036" y="712.700"/>
  <use class="w" href="#coil" x="1069" y="712.700"/>
  <path class="w" d="M1059 712.700H1069"/>
  <use href="#pt" x="1102.900" y="712.700"/>
  <text class="t9 dk" x="1064" y="742" text-anchor="middle">L</text>
  <path class="w" d="M1105 712.700H1213"/>
  <use href="#pt" x="1215" y="712.700"/>
  <path class="wd" d="M1217 713H1235M1253 713H1272M1220 713V726.700H1234.400M1252 726.700H1266V713"/>
  <path class="w" d="M1235.400 704L1253 712.800L1235.400 721.700zM1253 704V721.700"/>
  <rect class="snb" x="1234.400" y="724.300" width="17.600" height="4.400"/>
  <use href="#pt" x="1273.700" y="712.700"/>
  <polyline class="w" points="1275.700,712.700 1429,712.700 1429,739.500"/>

  <circle class="j" cx="970.400" cy="712.700" r="2.200"/><circle class="j" cx="1150.400" cy="712.700" r="2.200"/><circle class="j" cx="1330.300" cy="712.700" r="2.200"/>

  <!-- C boost -->
  <path class="w" d="M970.400 712.700V735.700"/><use href="#pt" x="970" y="737.700"/>
  <text class="red" x="967.500" y="749">+</text>
  <use class="w" href="#zig" transform="translate(970.400 748) rotate(90)"/>
  <path class="wg3" d="M970.400 771V789"/>
  <path class="capb" d="M964 789.300H976"/><path class="w" d="M964.500 799Q970.400 794 976 799"/>
  <path class="w" d="M970.400 796V811.700"/><use href="#pt" x="970" y="813.700"/>
  <path class="w" d="M970.400 815.700V868.300"/>
  <text class="t9 dk" x="931.800" y="779" text-anchor="middle">C boost</text>

  <!-- mosfet -->
  <path class="w" d="M1150.400 712.700V744.700"/><use href="#pt" x="1150" y="746.700"/>
  <rect class="blk thick2" x="1138.600" y="748.700" width="40" height="54.600"/>
  <text class="t7 dk" transform="translate(1147 757) rotate(90)">D</text>
  <text class="t7 dk" transform="translate(1166 754) rotate(90)">g</text>
  <text class="t7 dk" transform="translate(1164 797) rotate(90) rotate(180)">S</text>
  <path class="w" d="M1148 764H1162M1148 764V787H1162M1161 762V773M1161 776V785M1167 762V786M1167 774H1175M1160 774H1154M1156 770L1160 774L1156 778zM1148 771L1144 778H1152zM1144 771H1152M1160 787V793"/>
  <use href="#pt" x="1159" y="805"/>
  <path class="w" d="M1159 807V868.300"/>

  <!-- C buck -->
  <path class="w" d="M1330.300 712.700V739.700"/><use href="#pt" x="1330" y="741.700"/>
  <text class="red" x="1327.500" y="753">+</text>
  <use class="w" href="#zig" transform="translate(1330.300 751) rotate(90)"/>
  <path class="wg3" d="M1330.300 774V794"/>
  <path class="capb" d="M1324 794H1336"/><path class="w" d="M1324.500 804Q1330.300 799 1336 804"/>
  <path class="w" d="M1330.300 801V816.700"/><use href="#pt" x="1330" y="818.700"/>
  <path class="w" d="M1330.300 820.700V868.300"/>
  <text class="t9 dk" x="1293" y="784" text-anchor="middle">C buck</text>

  <!-- R load -->
  <use href="#pt" x="1429" y="741.700"/>
  <text class="red" x="1426.300" y="753">+</text>
  <path class="w" d="M1429 743.700V756L1423 762L1435 770L1423 781L1435 791L1429 800V816.700"/>
  <use href="#pt" x="1429" y="818.700"/>
  <polyline class="w" points="1429,820.700 1429,868.300 664,868.300"/>
  <text class="t9 dk" x="1390.500" y="784" text-anchor="middle">R_Load</text>
  <circle class="j" cx="970.400" cy="868.300" r="2.200"/><circle class="j" cx="1159" cy="868.300" r="2.200"/><circle class="j" cx="1330.300" cy="868.300" r="2.200"/>

  <!-- middle diode -->
  <path class="w" d="M664.300 708.300V767M664.300 830V950"/>
  <use href="#pt" x="664" y="769"/><use href="#pt" x="664" y="827.700"/>
  <path class="w" d="M664.300 771V788.700M653.600 788.700H676M664.800 788.700L676 806.700H653.600zM664.300 806.700V825.700"/>
  <rect class="snb" x="680.400" y="789.300" width="6.400" height="18"/>
  <path class="wd" d="M664.300 775.700H683.600V789.300M683.600 807.300V822H664.300"/>
  <polyline class="w" points="664.300,740.300 740.700,740.300 740.700,780.300 788,780.300"/>
  <polyline class="w" points="664.300,846.300 740.700,846.300 740.700,789.300 788,789.300"/>
  <circle class="j" cx="664.300" cy="708.300" r="2.200"/><circle class="j" cx="664.300" cy="740.300" r="2.200"/><circle class="j" cx="664.300" cy="846.300" r="2.200"/><circle class="j" cx="664.300" cy="868.300" r="2.200"/>
  <use href="#ptf" x="788" y="780.300"/><use href="#ptf" x="788" y="789.300"/>
  <rect class="blk sens" x="789.600" y="774" width="23.300" height="22"/>
  <text class="t7" x="793" y="787">+</text><text class="t7" x="793" y="794">-</text><text class="t7" x="806" y="789">v</text>
  <path class="wg2" d="M797 780H808M797 788H805" stroke-dasharray="2 2"/>
  <polyline class="w" points="812.900,784.300 856.500,784.300" marker-end="url(#a)"/>
  <circle class="j" cx="828.400" cy="784.300" r="2"/>
  <path class="blk" d="M857 785L867 768.300H897.900V801.700H867z"/><text class="t9 dk" x="882" y="788" text-anchor="middle">[Vin]</text>

  <!-- knob -->
  <text class="t9 gr" x="1646" y="717.500" text-anchor="middle">Condition:Value</text>
  <text class="t9 kb" x="1589" y="813" text-anchor="end">Condition A</text>
  <text class="t9 kb" x="1594" y="759" text-anchor="middle">Condition B</text>
  <text class="t9 kb" x="1700" y="759" text-anchor="middle">Condition C</text>
  <text class="t9 kb" x="1705" y="813">Condition D</text>
  <circle class="kd" cx="1597.300" cy="810" r="3.500"/><circle class="kd" cx="1621.600" cy="768.300" r="3.500"/><circle class="kd" cx="1670" cy="768.300" r="3.500"/><circle class="kd" cx="1694.500" cy="810" r="3.500"/>
  <circle cx="1647.600" cy="808.300" r="40.300" fill="#b8b8b8" stroke="#a8a8a8"/>
  <path d="M1627.500 773.500L1667 842" stroke="#d0d0d0" stroke-width="12" fill="none"/>
  <path d="M1627.200 774L1639 794" stroke="#e0383c" stroke-width="2.500" fill="none"/>
</svg>
          <div class="corner"><i></i><i></i><i></i></div>
        </div>
        <div class="vscroll"><div class="vthumb"></div></div>
      </div>
      <div class="hscroll"><div class="hthumb"></div></div>
    </div>
  </div>

  <footer class="status">
    <span class="st-run">Running</span>
    <span class="st-link">View diagnostics</span>
    <span class="st-zoom">60%</span>
    <span class="st-time">T=14.847</span>
    <div class="st-prog"><div class="st-bar">98%</div></div>
    <span class="st-solver">auto(FixedStepDiscrete)</span>
  </footer>

  <div class="taskbar">
    <svg class="win" width="34" height="34" viewBox="0 0 34 34"><rect x="0" y="0" width="16.500" height="16.500" rx="1.500" fill="#5fc8f8"/><rect x="17.500" y="0" width="16.500" height="16.500" rx="1.500" fill="#44b6f5"/><rect x="0" y="17.500" width="16.500" height="16.500" rx="1.500" fill="#2aa5ee"/><rect x="17.500" y="17.500" width="16.500" height="16.500" rx="1.500" fill="#1b96e8"/></svg>
    <div class="search">
      <svg width="24" height="26" viewBox="0 0 24 26"><circle cx="11" cy="11" r="8.500" fill="none" stroke="#e4e4e4" stroke-width="2"/><path d="M17 17L22 24" stroke="#e4e4e4" stroke-width="2"/></svg>
      <span class="search-txt">Search</span>
      <svg class="fish" width="76" height="42" viewBox="0 0 76 42"><path d="M0 40Q16 28 42 32L40 41H8z" fill="#39b6e0"/><ellipse cx="17" cy="14" rx="14" ry="10" fill="#f07f16"/><path d="M8 6Q12 14 8 22M16 4Q20 14 16 24" stroke="#fff" stroke-width="2.500" fill="none"/><circle cx="5" cy="12" r="1.500" fill="#222"/><path d="M30 13L38 7V21z" fill="#e46d0c"/><ellipse cx="55" cy="32" rx="17" ry="9" fill="#a57fd6"/><path d="M46 32Q48 20 52 28M58 30Q56 16 62 22M66 30Q68 18 72 24" stroke="#e98a26" stroke-width="3" fill="none"/><path d="M44 36Q56 28 70 36" stroke="#7857ad" stroke-width="2" fill="none"/></svg>
    </div>
    <div class="tb-icons">
      <div class="tbi tbi-cop"><svg width="36" height="42" viewBox="0 0 36 42"><path d="M10 2H22L28 28H16L10 36Q0 32 1 24Q3 14 10 2z" fill="#2f8fe0"/><path d="M22 2L28 5L35 22L28 28z" fill="#c45fd8"/><path d="M1 24L16 20L16 28L8 36z" fill="#7ac943"/><path d="M16 12L26 12L28 22L16 24z" fill="#fff" opacity=".05"/><path d="M2 24Q8 16 14 20L8 34Q2 32 2 24" fill="#f0c020"/><rect x="10" y="28" width="26" height="14" rx="2" fill="#ffc000"/><text class="pre" x="23" y="39" text-anchor="middle">PRE</text></svg></div>
      <div class="tbi tbi-task"><svg width="36" height="34" viewBox="0 0 36 34"><rect x="1" y="12" width="26" height="22" rx="2" fill="#6f6f6f"/><rect x="10" y="1" width="26" height="24" rx="2" fill="#f2f2f2"/><rect x="10" y="12" width="17" height="13" fill="#bfbfbf"/></svg></div>
      <div class="tbi tbi-exp dot"><svg width="36" height="34" viewBox="0 0 36 34"><path d="M0 3Q0 0 3 0H12L16 4H36V10H0z" fill="#d9a300"/><rect x="0" y="5" width="36" height="29" rx="1" fill="#fbd75a"/><rect x="7" y="20" width="22" height="14" rx="2" fill="#0f7fd8"/><rect x="12" y="24" width="12" height="2" fill="#bfe2ff"/></svg></div>
      <div class="tbi tbi-word"><svg width="36" height="34" viewBox="0 0 36 34"><rect x="9" y="0" width="27" height="34" rx="2" fill="#2b7cd3"/><rect x="9" y="0" width="27" height="11" fill="#41a5ee"/><rect x="9" y="22" width="27" height="12" fill="#185abd"/><rect x="0" y="8" width="19" height="19" rx="2" fill="#124da8"/><text class="ofc" x="9.500" y="23" text-anchor="middle">W</text></svg></div>
      <div class="tbi tbi-ppt"><svg width="36" height="36" viewBox="0 0 36 36"><circle cx="20" cy="18" r="16" fill="#d35230"/><path d="M20 2A16 16 0 0 1 36 18H20z" fill="#ff8f6b"/><path d="M20 18H36A16 16 0 0 1 20 34z" fill="#ed6c47"/><rect x="0" y="8" width="19" height="20" rx="2" fill="#c43e1c"/><text class="ofc" x="9.500" y="23.500" text-anchor="middle">P</text></svg></div>
      <div class="tbi tbi-xls"><svg width="36" height="36" viewBox="0 0 36 36"><rect x="8" y="1" width="28" height="34" rx="2" fill="#21a366"/><rect x="22" y="1" width="14" height="11" fill="#33c481"/><rect x="8" y="1" width="14" height="11" fill="#21a366"/><rect x="8" y="12" width="14" height="12" fill="#107c41"/><rect x="8" y="24" width="28" height="11" fill="#185c37"/><rect x="0" y="9" width="19" height="19" rx="2" fill="#107c41"/><text class="ofc" x="9.500" y="24" text-anchor="middle">X</text></svg></div>
      <div class="tbi tbi-pbi"><svg width="30" height="38" viewBox="0 0 30 38"><rect x="1" y="20" width="11" height="18" fill="#f2d060"/><rect x="9" y="10" width="12" height="28" fill="#f2c811"/><rect x="17" y="0" width="13" height="38" fill="#d9a300"/></svg></div>
      <div class="tbi tbi-zalo"><svg width="36" height="38" viewBox="0 0 36 38"><path d="M10 0H26Q36 0 36 12V26Q36 36 26 36H8L3 38Q0 32 0 26V10Q0 0 10 0z" fill="#1f7cf2"/><path d="M9 2H27Q34 2 34 11V26Q34 31 27 32H10Q4 31 3 26V11Q3 2 9 2z" fill="#fff"/><text class="zalo" x="18" y="22" text-anchor="middle">Zalo</text></svg></div>
      <div class="tbi tbi-chrome dot"><svg width="36" height="36" viewBox="0 0 36 36"><circle cx="18" cy="18" r="18" fill="#2fa84f"/><path d="M18 0A18 18 0 0 1 34 9H18A9 9 0 0 0 9.500 13L2 6A18 18 0 0 1 18 0z" fill="#ea4335"/><path d="M34 9A18 18 0 0 1 18 36L26 23A9 9 0 0 0 18 9z" fill="#fbbc05"/><circle cx="18" cy="18" r="9.500" fill="#fff"/><circle cx="18" cy="18" r="7.500" fill="#4285f4"/></svg></div>
      <div class="tbi tbi-mat"><svg class="mat-ic" width="36" height="36" viewBox="0 0 36 36"><path d="M19 0L31 32L25 27L17 34L11 20z" fill="url(#gMat)"/><path d="M0 21L11 12L16 20L8 28z" fill="#3d9bdc"/><path d="M11 13L19 0L16 20z" fill="#f1a53a"/></svg><i class="act"></i></div>
      <div class="tbi tbi-pdf dot"><svg width="36" height="38" viewBox="0 0 36 38"><path d="M0 0H27L36 9V38H0z" fill="#7a2d8a"/><path d="M27 0L36 9H27z" fill="#ab71b7"/><circle cx="17" cy="14" r="9" fill="#fff"/><path d="M22 10A6 6 0 1 0 22 18V13H16" fill="none" stroke="#7a2d8a" stroke-width="2.500"/><text class="pdf" x="18" y="34" text-anchor="middle">PDF</text></svg></div>
    </div>
    <div class="tray">
      <svg class="tr-up" width="18" height="12" viewBox="0 0 18 12"><path d="M1.500 10.500L9 2.500L16.500 10.500" fill="none" stroke="#f2f2f2" stroke-width="1.500"/></svg>
      <span class="eng">ENG</span>
      <svg class="tr-wifi" width="26" height="24" viewBox="0 0 26 24"><path d="M2 10Q13 0 24 10M6 14Q13 7 20 14M9.500 18Q13 14 16.500 18" fill="none" stroke="#f2f2f2" stroke-width="1.700"/><circle cx="13" cy="21.500" r="1.800" fill="#f2f2f2"/></svg>
      <svg class="tr-vol" width="26" height="26" viewBox="0 0 26 26"><path d="M2 9H7L13 4V22L7 17H2z" fill="none" stroke="#f2f2f2" stroke-width="1.500"/><path d="M16 9Q18.500 13 16 17M19 6Q23 13 19 20M22 3Q27 13 22 23" fill="none" stroke="#f2f2f2" stroke-width="1.500"/></svg>
      <div class="clock"><span>10:49 PM</span><span>1/30/2024</span></div>
      <svg class="bell" width="22" height="28" viewBox="0 0 22 28"><path d="M11 1Q17 1 18 9V18L21 22H1L4 18V9Q5 1 11 1z" fill="#5ee8df"/><path d="M7 24H15Q14 28 11 28T7 24z" fill="#5ee8df"/></svg>
    </div>
  </div>
</div>
</body>
</html>
```

FILE: styles.css
```css
* { box-sizing: border-box; }
html, body { margin: 0; padding: 0; }
body { width: 1920px; height: 1080px; overflow: hidden; font-family: "Open Sans", "Noto Sans", sans-serif; color: #222; background: #f0f0f0; }
.defs { position: absolute; width: 0; height: 0; }
.app { display: flex; flex-direction: column; width: 1920px; height: 1080px; }

/* title bar */
.titlebar { height: 34px; flex: none; background: #eff3f8; display: flex; align-items: center; padding-left: 3px; }
.title-icon { flex: none; margin-top: 6px; }
.title-text { margin-left: 2px; font-size: 17.600px; letter-spacing: -0.35px; color: #111; }
.winctl { margin-left: auto; display: flex; gap: 49px; padding-right: 27px; }

/* tab bar */
.tabbar { height: 42px; flex: none; background: #004072; display: flex; align-items: stretch; position: relative; }
.tab { width: 159px; flex: none; color: #fff; font-size: 16.500px; letter-spacing: -0.5px; display: flex; align-items: center; justify-content: center; }
.tab-active { width: 150px; margin: 5px 4.500px 0 5px; background: #f5f5f5; color: #333; border-radius: 3px 3px 0 0; }
.tab-scope { background: #1268b3; margin-left: 0; }
.qat { position: absolute; left: 1553px; top: 5px; width: 352px; height: 33px; background: #5c87ab; clip-path: polygon(9px 0, 100% 0, 100% 100%, 9px 100%, 0 50%); display: flex; align-items: center; }
.qat svg { flex: none; }
.q-save { margin-left: 25px; }
.q-undo { margin-left: 17px; }
.q-redo { margin-left: 15px; }
.q-find { margin-left: 16px; }
.q-short { margin-left: 14px; }
.q-caret { width: 0; height: 0; border-left: 5.500px solid transparent; border-right: 5.500px solid transparent; border-top: 8px solid #111; margin-left: 11px; flex: none; }
.q-help { margin-left: 20px; }
.q-caret2 { margin-left: 11px; }
.q-down { margin-left: 22px; }
.q-chev { font: 700 14px "Liberation Sans", sans-serif; fill: #111; }
.q-q { font: 700 19px "Liberation Sans", sans-serif; fill: #0d4d80; }

/* ribbon */
.ribbon { height: 138px; flex: none; background: #f5f5f5; display: flex; border-bottom: 1px solid #fff; }
.group { display: flex; flex-direction: column; border-right: 1px solid #d0d0d0; margin-top: 12px; flex: none; }
.gbody { height: 100px; flex: none; margin-top: -3px; display: flex; }
.glabel { text-align: center; color: #5a5a5a; font-size: 16.500px; letter-spacing: -0.55px; line-height: 22px; margin-top: 8px; }
.lbl { font-size: 17px; letter-spacing: -0.2px; line-height: 24px; white-space: nowrap; color: #333; }
.big { display: flex; flex-direction: column; align-items: center; flex: none; padding-top: 9px; }
.big svg { margin-bottom: 11px; }
.round svg { margin-top: -2px; }
.caret { display: inline-block; width: 0; height: 0; border-left: 5px solid transparent; border-right: 5px solid transparent; border-top: 7px solid #555; flex: none; }
.caret-dk { border-top-color: #555; }
.big > .caret { margin-top: 7px; }
.dim .lbl { color: #a9a9a9; }
.dim .caret { border-top-color: #b0b0b0; }
.dim .lbl-dark { color: #333; }
.dim .lbl-dark .caret { border-top-color: #555; }

.g-file { width: 211px; }
.g-new { width: 61px; }
.file-list { display: flex; flex-direction: column; margin-top: -2px; }
.frow { height: 36px; flex: none; display: flex; align-items: center; margin-left: 3px; }
.frow .lbl { margin-left: 9px; width: 59px; }
.c-open { margin-left: 9px; }
.c-save { margin-left: 2px; }
.g-lib { width: 89px; }
.g-libbtn { width: 88px; }
.g-prep { width: 434px; padding-left: 5px; }
.g-prep .glabel { margin-left: -5px; }
.gallery { display: flex; background: #fff; border: 1px solid #c0c0c0; border-radius: 0 4px 4px 0; height: 102px; }
.gal-prep { width: 424px; padding-left: 8px; }
.gal-rev { width: 525px; padding-left: 8px; }
.gitem { display: flex; flex-direction: column; align-items: center; width: 126px; flex: none; }
.gitem svg { height: 36px; margin-top: 10px; margin-bottom: 1px; }
.gitem .gi-sig { height: 28px; margin-top: 14px; margin-bottom: 5px; }
.ritem { width: 120px; }
.gmore { margin-left: auto; width: 29px; background: #f5f5f5; border-left: 1px solid #c8c8c8; display: flex; align-items: center; justify-content: center; border-radius: 0 4px 4px 0; }
.g-sim { width: 549px; padding-left: 7px; }
.g-sim .glabel { margin-left: -7px; }
.stop-col { width: 196px; flex: none; display: flex; flex-direction: column; margin-top: -1px; }
.stop-row { height: 33px; flex: none; display: flex; align-items: center; padding-left: 3px; }
.stop-row .lbl { width: 98px; }
.stop-input { width: 95px; height: 33px; background: #fff; border: 1px solid #555; font-size: 17px; line-height: 31px; padding-left: 7px; color: #333; }
.mode { height: 33px; flex: none; margin-top: 4px; border: 1px solid #cfcfcf; border-radius: 8px; background: #f0f0f0; color: #a9a9a9; font-size: 17px; display: flex; align-items: center; justify-content: space-between; padding: 0 13px 0 7px; }
.mode .caret { border-top-color: #b0b0b0; }
.fast { display: flex; align-items: center; gap: 10px; padding-left: 3px; margin-top: 5px; height: 34px; flex: none; }
.g-stepb { width: 78px; margin-left: 13px; }
.back-row { display: flex; align-items: center; gap: 9px; margin-left: 0; }
.g-pause { width: 87px; }
.g-stepf { width: 91px; }
.g-stop { width: 70px; }
.g-rev { width: 537px; padding-left: 6px; }
.g-rev .glabel { margin-left: -6px; }
.g-tail { flex: 1; display: flex; justify-content: flex-end; align-items: flex-end; padding: 0 9px 3px 0; }

/* document tabs */
.doc-tabs { height: 29px; flex: none; background: #f0f0f0; display: flex; align-items: flex-end; position: relative; }
.nav { width: 131px; flex: none; display: flex; align-items: center; gap: 19px; padding: 6px 0 0 11px; height: 29px; }
.nav svg:last-child { margin-left: 2px; }
.dtab { display: flex; align-items: center; font-size: 16px; letter-spacing: -0.5px; color: #111; flex: none; padding-top: 2px; }
.dtab-off { width: 181px; height: 24px; background: #ececec; border: 1px solid #d4d4d4; border-bottom: 0; padding-left: 10px; }
.dtab-on { width: 188px; height: 27px; background: #fff; border: 1px solid #d4d4d4; border-bottom: 0; padding-left: 10px; }
.x { font-weight: 700; font-size: 18px; line-height: 20px; margin-left: auto; margin-right: 8px; color: #777; font-family: "DejaVu Sans", sans-serif; }
.x-off { color: #bdbdbd; }
.kbd { position: absolute; right: 14px; top: 6px; }

/* main */
.main { height: 733px; flex: none; display: flex; }
.tools { width: 52px; flex: none; display: flex; flex-direction: column; align-items: center; padding: 1px 0 2px 1px; background: #f0f0f0; border-top: 2px solid #8a8f96; }
.tool { height: 42px; flex: none; display: flex; align-items: center; justify-content: center; }
.tool-sep { width: 28px; height: 1px; background: #aaa; margin: 6px 0 8px; flex: none; }
.tools-gap { flex: 1; }
.tool-a { font: 700 12px "Liberation Sans", sans-serif; fill: #333; }
.editor { flex: none; width: 1866px; display: flex; flex-direction: column; border-left: 1px solid #8a8f96; border-right: 1px solid #8a8f96; border-bottom: 1px solid #8a8f96; }
.crumb { height: 48px; flex: none; background: #f4f4f4; border-top: 3px solid #8a8f96; border-bottom: 2px solid #8a8f96; }
.crumb-in { height: 37px; background: #fff; display: flex; align-items: center; padding: 1px 0 0 4px; position: relative; }
.crumb-ic { flex: none; }
.crumb-txt { font-size: 17.300px; letter-spacing: -0.35px; margin-left: 2px; color: #111; }
.crumb-arr { width: 0; height: 0; border-top: 7px solid transparent; border-bottom: 7px solid transparent; border-left: 7px solid #111; margin-left: 9px; }
.crumb-drop { position: absolute; right: 8px; top: 13px; width: 0; height: 0; border-left: 7px solid transparent; border-right: 7px solid transparent; border-top: 9px solid #111; }
.work { height: 659px; flex: none; display: flex; }
.canvas { width: 1839px; flex: none; background: #f6f6f6; overflow: hidden; position: relative; }
.diagram { display: block; }
.corner { position: absolute; right: 2px; bottom: 3px; display: flex; gap: 1px; }
.corner i { width: 9px; height: 11px; background: #ebebeb; }
.vscroll { flex: 1; background: #f0f0f0; padding: 26px 0 0 7px; }
.vthumb { width: 11px; height: 299px; background: #888; }
.hscroll { height: 25px; flex: none; background: #f0f0f0; padding: 7px 0 0 470px; }
.hthumb { width: 1342px; height: 11px; background: #888; }

/* diagram */
.w { fill: none; stroke: #111; stroke-width: 1.200; }
.wd { fill: none; stroke: #333; stroke-width: 1.300; }
.wb { fill: none; stroke: #1414e6; stroke-width: 1.200; }
.wg { fill: none; stroke: #666; stroke-width: 1.500; }
.wg2 { fill: none; stroke: #aaa; stroke-width: .8; }
.wg3 { fill: none; stroke: #888; stroke-width: 1; }
.j { fill: #111; }
.jb { fill: #1414e6; }
.blk { fill: #f6f6f6; stroke: #333; stroke-width: 1.200; filter: drop-shadow(1px 1.500px .6px rgba(0, 0, 0, .4)); }
.thick { stroke: #111; stroke-width: 2; }
.thick2 { stroke: #444; stroke-width: 1.800; }
.sens { stroke: #555; fill: #f2f2f2; }
.inner { fill: #f6f6f6; stroke: #222; stroke-width: 1.200; }
.snb { fill: #f6f6f6; stroke: #444; stroke-width: 1.100; }
.oc { fill: #f6f6f6; stroke: #111; stroke-width: 1.100; }
.cyan { fill: #00f0ff; stroke: #1414e6; stroke-width: 1.200; filter: drop-shadow(1px 1.500px .6px rgba(0, 0, 0, .4)); }
.sel { fill: #63b8f5; }
.scr { fill: #f6f6f6; stroke: #111; stroke-width: 1.300; }
.capb { fill: none; stroke: #555; stroke-width: 2; }
.t7, .t8, .t9, .t10, .red { font-family: "Liberation Sans", sans-serif; }
.t7 { font-size: 7.500px; fill: #333; }
.t8 { font-size: 8.500px; fill: #333; }
.t9 { font-size: 9.500px; fill: #333; }
.t10 { font-size: 10.500px; fill: #333; }
.dk { fill: #444; }
.bluetxt { fill: #1414e6; }
.scopetxt { fill: #3ea3f0; }
.gr { fill: #777; }
.kb { fill: #333; }
.kd { fill: #666; }
.red { font-size: 9px; fill: #e02020; }
.lnk { fill: none; stroke: #888; stroke-width: 1.100; }

/* status */
.status { height: 32px; flex: none; background: #f0f0f0; display: flex; align-items: center; font-size: 17.400px; letter-spacing: -0.2px; position: relative; padding-top: 3px; }
.st-run { margin-left: 6px; color: #111; }
.st-link { margin-left: 890px; color: #0a0a96; width: 296px; flex: none; }
.st-zoom { color: #222; width: 89px; flex: none; }
.st-time { color: #222; width: 100px; flex: none; }
.st-prog { width: 122px; height: 24px; border: 1px solid #ccc; background: #f0f0f0; padding-right: 1px; flex: none; margin-top: -2px; }
.st-bar { height: 100%; background: #06ad27; color: #fff; text-align: center; line-height: 22px; font-size: 16.500px; }
.st-solver { margin-left: auto; padding-right: 8px; color: #0a0a96; }

/* taskbar */
.taskbar { height: 72px; flex: none; background: #1f1f1f; border-top: 2px solid #3e3e3e; display: flex; align-items: center; position: relative; color: #f2f2f2; padding-bottom: 2px; }
.win { margin-left: 32px; flex: none; }
.search { width: 328px; height: 48px; margin-left: 21px; flex: none; border-radius: 24px; background: #3b3b3b; border: 1px solid #555; display: flex; align-items: center; padding-left: 16px; }
.search-txt { margin-left: 15px; font-size: 20px; color: #d0d0d0; }
.fish { margin-left: auto; margin-right: 3px; }
.tb-icons { display: flex; margin-left: 4px; height: 60px; align-items: center; flex: none; }
.tbi { width: 66px; height: 60px; flex: none; display: flex; align-items: center; justify-content: center; position: relative; }
.tbi.dot::after { content: ""; position: absolute; left: 50%; bottom: 0; width: 8px; height: 8px; margin-left: -4px; border-radius: 50%; background: #888; }
.tbi-mat { background: #2e2e2e; border-radius: 6px; width: 53px; margin: 0 6.500px; box-shadow: 3px 0 0 #292929; }
.mat-ic { margin-left: 4px; }
.act { position: absolute; left: 17px; bottom: 1px; width: 23px; height: 5px; border-radius: 3px; background: #2ff1de; }
.pre { font: 700 10px "Liberation Sans", sans-serif; fill: #222; }
.ofc { font: 700 13px "Liberation Sans", sans-serif; fill: #fff; }
.zalo { font: 700 11px "Liberation Sans", sans-serif; fill: #1f7cf2; }
.pdf { font: 700 8px "Liberation Sans", sans-serif; fill: #e8d5ec; }
.tray { margin-left: auto; display: flex; align-items: center; padding-right: 31px; flex: none; }
.tr-up { margin-right: 31px; }
.eng { font-size: 17.500px; width: 48px; text-align: left; letter-spacing: -.4px; margin-right: 15px; color: #f2f2f2; }
.tr-wifi { margin-right: 10px; }
.tr-vol { margin-right: 24px; }
.clock { display: flex; flex-direction: column; align-items: flex-end; font-size: 17.800px; line-height: 25px; letter-spacing: -.2px; color: #f2f2f2; }
.bell { margin-left: 12px; }
```
